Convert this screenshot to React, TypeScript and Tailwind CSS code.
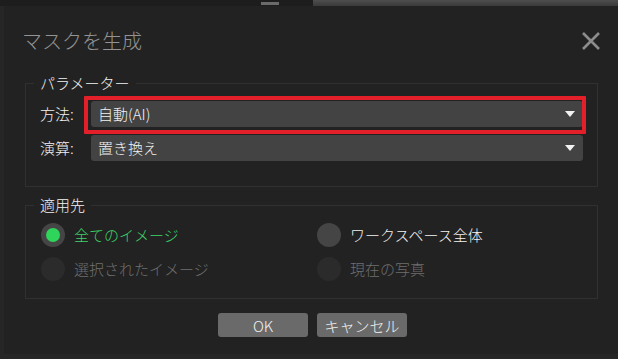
import React from 'react';

const font = { fontFamily: '"Noto Sans CJK JP", "Noto Sans", sans-serif' };

function Arrow() {
  return (
    <svg width="10" height="6" viewBox="0 0 10 6" className="shrink-0">
      <polygon points="0,0 10,0 5,6" fill="#f2f2f2" />
    </svg>
  );
}

function Select({ value }: { value: string }) {
  return (
    <div className="flex-1 h-[26px] rounded-[3px] bg-[#434343] flex items-center justify-between pl-[7px] pr-[8px] text-[15px] text-[#f2f2f2]">
      <span>{value}</span>
      <Arrow />
    </div>
  );
}

function Radio({ label, checked, disabled }: { label: string; checked?: boolean; disabled?: boolean }) {
  const ring = disabled ? 'bg-[#2b2b2b]' : 'bg-[#454545]';
  const text = checked ? 'text-[#3fd56a]' : disabled ? 'text-[#6f6f6f]' : 'text-[#f2f2f2]';
  return (
    <div className="flex items-center h-[34px]">
      <div className={`w-[24px] h-[24px] rounded-full flex items-center justify-center ${ring}`}>
        {checked && <div className="w-[14px] h-[14px] rounded-full bg-[#2fd45a]" />}
      </div>
      <span className={`ml-[9px] text-[15px] ${text}`}>{label}</span>
    </div>
  );
}

export default function App() {
  return (
    <div className="w-[618px] h-[359px] bg-[#262626] overflow-hidden select-none font-light" style={font}>
      {/* background app strip */}
      <div className="flex h-[6px]">
        <div className="w-[313px] bg-[#1d1d1d] relative">
          <div className="absolute left-[261px] top-[2px] w-[18px] h-[3px] bg-[#6a6a6a]" />
        </div>
        <div className="flex-1 bg-gradient-to-b from-[#4e4e4e] to-[#3a3a3a]" />
      </div>

      <div className="ml-[4px] w-[614px] h-[348px] bg-[#222222] pt-[21px] pl-[21px] pr-[20px]">
        <div className="flex items-center justify-between h-[28px]">
          <span className="text-[20px] text-[#939393] ml-[-3px]">マスクを生成</span>
          <svg width="20" height="20" viewBox="0 0 20 20" className="mr-[-3px]">
            <path d="M2 2 L18 18 M18 2 L2 18" stroke="#8c8c8c" strokeWidth="2.6" />
          </svg>
        </div>

        <fieldset className="mt-[18px] border border-[#303030] pl-[14px] pr-[14px] pt-[8px] pb-[25px]">
          <legend className="-ml-[6px] px-[6px] text-[15px] leading-[20px] text-[#f2f2f2]">パラメーター</legend>
          <div className="flex items-center">
            <span className="w-[51px] text-[15px] text-[#f2f2f2]">方法:</span>
            <div className="flex-1 relative">
              <Select value="自動(AI)" />
              <div className="absolute left-[-7px] top-[-5px] right-[-3px] bottom-[-7px] border-[4px] border-[#e3202a] rounded-[1px]" />
            </div>
          </div>
          <div className="flex items-center mt-[8px]">
            <span className="w-[51px] text-[15px] text-[#f2f2f2]">演算:</span>
            <Select value="置き換え" />
          </div>
        </fieldset>

        <fieldset className="mt-[8px] border border-[#303030] pl-[15px] pr-[14px] pt-[3px] pb-[12px]">
          <legend className="-ml-[7px] px-[6px] text-[15px] leading-[20px] text-[#f2f2f2]">適用先</legend>
          <div className="grid grid-cols-[276px_1fr]">
            <Radio label="全てのイメージ" checked />
            <Radio label="ワークスペース全体" />
            <Radio label="選択されたイメージ" disabled />
            <Radio label="現在の写真" disabled />
          </div>
        </fieldset>

        <div className="flex justify-center gap-[9px] mt-[14px] pl-[2px]">
          <button className="w-[90px] h-[24px] rounded-[3px] bg-[#6a6a6a] text-[15px] text-[#f2f2f2] leading-none">OK</button>
          <button className="w-[90px] h-[24px] rounded-[3px] bg-[#6a6a6a] text-[15px] text-[#f2f2f2] leading-none">キャンセル</button>
        </div>
      </div>
    </div>
  );
}
